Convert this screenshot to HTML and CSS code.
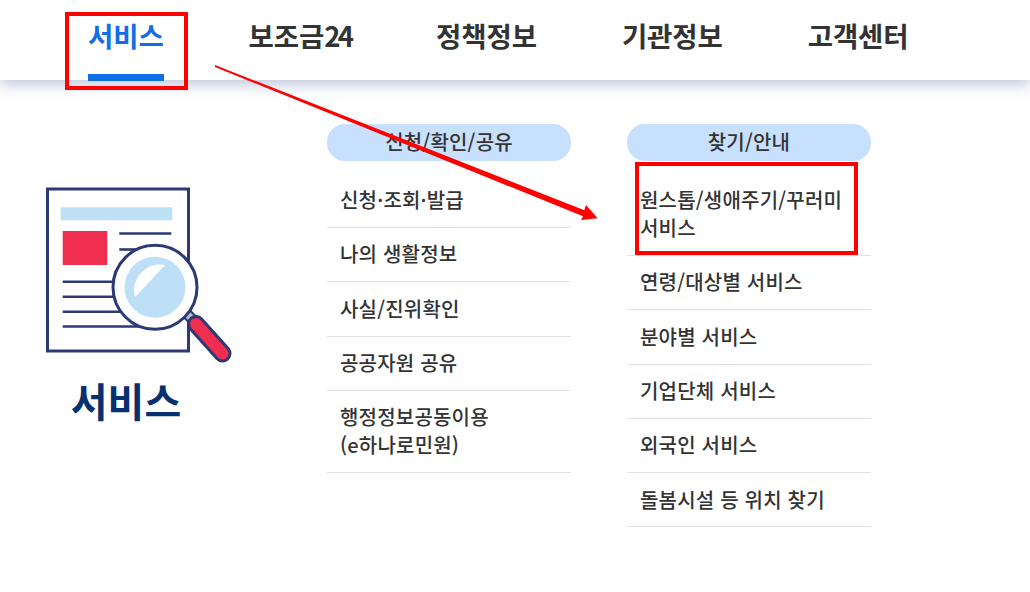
FILE: index.html
```html
<!DOCTYPE html>
<html lang="ko">
<head>
    <meta charset="UTF-8">
    <meta name="viewport" content="width=device-width, initial-scale=1.0">
    <title>서비스</title>
    <link rel="stylesheet" href="styles.css">
</head>
<body>
    <header class="top-nav">
        <a class="nav-item active">서비스</a>
        <a class="nav-item">보조금<span class="nav-num">24</span></a>
        <a class="nav-item">정책정보</a>
        <a class="nav-item">기관정보</a>
        <a class="nav-item">고객센터</a>
    </header>

    <main class="menu-panel">
        <div class="menu-intro">
            <svg class="intro-icon" viewBox="0 0 200 190" width="200" height="190">
                <rect x="7.5" y="9" width="141" height="162" fill="#fff" stroke="#2b3a75" stroke-width="3"/>
                <rect x="20.7" y="27.3" width="111.6" height="13" fill="#bde0f7"/>
                <rect x="22.7" y="51" width="44.6" height="34" fill="#f02e50"/>
                <g stroke="#2b3a75" stroke-width="2.6" fill="none">
                    <path d="M79.3 53.5H131.3"/>
                    <path d="M79.3 69.5H110"/>
                    <path d="M22.7 101.7H90"/>
                    <path d="M22.7 116.7H90"/>
                    <path d="M22.7 131.7H95"/>
                    <path d="M22.7 146.5H110"/>
                </g>
                <path d="M146 133L156 143" stroke="#2b3a75" stroke-width="11"/>
                <path d="M147 134L155 142" stroke="#b9bec4" stroke-width="7"/>
                <path d="M156 144L182.500 173.500" stroke="#2b3a75" stroke-width="18" stroke-linecap="round"/>
                <path d="M156 144L182.500 173.500" stroke="#f02e50" stroke-width="12" stroke-linecap="round"/>
                <circle cx="115" cy="107.300" r="42" fill="#fff" stroke="#2b3a75" stroke-width="3"/>
                <circle cx="115" cy="107.300" r="30.500" fill="#bde0f7"/>
                <path d="M95 117.300A26 26 0 0 1 125 85Z" fill="#fff"/>
            </svg>
            <h2 class="intro-title">서비스</h2>
        </div>

        <section class="menu-col">
            <h3 class="col-title">신청/확인/공유</h3>
            <ul class="col-list">
                <li>신청·조회·발급</li>
                <li>나의 생활정보</li>
                <li>사실/진위확인</li>
                <li>공공자원 공유</li>
                <li>행정정보공동이용<br>(e하나로민원)</li>
            </ul>
        </section>

        <section class="menu-col">
            <h3 class="col-title">찾기/안내</h3>
            <ul class="col-list">
                <li>원스톱/생애주기/꾸러미<br>서비스</li>
                <li>연령/대상별 서비스</li>
                <li>분야별 서비스</li>
                <li>기업단체 서비스</li>
                <li>외국인 서비스</li>
                <li>돌봄시설 등 위치 찾기</li>
            </ul>
        </section>
    </main>

    <!-- annotations drawn over the page -->
    <div class="mark mark-tab"></div>
    <div class="mark mark-item"></div>
    <svg class="mark-arrow" viewBox="0 0 1030 592" width="1030" height="592">
        <path d="M215 65L215 67L583 216.300L581 220L597.700 218.300L586 205L584.300 210.300Z" fill="#f00"/>
    </svg>
</body>
</html>
```

FILE: styles.css
```css
* {
    margin: 0;
    padding: 0;
    box-sizing: border-box;
}

html, body {
    height: 100%;
    overflow: hidden;
}

body {
    font-family: "Noto Sans CJK KR", "Noto Sans", sans-serif;
    background: white;
    color: #333;
    position: relative;
}

.top-nav {
    display: flex;
    gap: 85px;
    height: 80px;
    padding-left: 88px;
    background: white;
    box-shadow: 0 4px 14px rgba(60, 80, 140, 0.35);
    position: relative;
}

.nav-item {
    display: block;
    height: 81px;
    padding-top: 16px;
    font-size: 27.5px;
    line-height: 38px;
    font-weight: 700;
    letter-spacing: -0.1px;
    color: #333;
    white-space: nowrap;
}

.nav-num {
    letter-spacing: -2.8px;
}

.nav-item.active {
    color: #0f6fe6;
    border-bottom: 7px solid #0f6fe6;
}

.menu-panel {
    display: flex;
    padding-top: 44px;
}

.menu-intro {
    width: 327px;
    padding: 56px 0 0 40px;
}

.intro-icon {
    display: block;
}

.intro-title {
    width: 172px;
    margin-top: 5px;
    font-size: 40px;
    line-height: 50px;
    font-weight: 700;
    color: #06306f;
    text-align: center;
}

.menu-col {
    width: 244px;
    margin-right: 56px;
}

.col-title {
    height: 37px;
    border-radius: 18px;
    background: #c7e0fd;
    font-size: 20px;
    line-height: 36px;
    font-weight: 500;
    letter-spacing: 0.2px;
    color: #333;
    text-align: center;
}

.col-list {
    list-style: none;
    margin-top: 12.7px;
}

.col-list li {
    padding: 12.5px 0 12.8px 13px;
    border-bottom: 1px solid #e2e2e2;
    font-size: 20px;
    line-height: 28px;
    font-weight: 500;
    letter-spacing: 0.2px;
    color: #333;
}

.mark {
    position: absolute;
    border: 4px solid #f00;
}

.mark-tab {
    left: 65px;
    top: 12px;
    width: 123px;
    height: 78px;
}

.mark-item {
    left: 635px;
    top: 162px;
    width: 223px;
    height: 93px;
}

.mark-arrow {
    position: absolute;
    left: 0;
    top: 0;
}
```
